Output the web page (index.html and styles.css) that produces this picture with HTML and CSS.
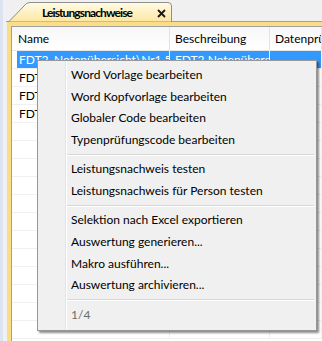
FILE: index.html
```html
<!DOCTYPE html>
<html lang="de">
  <head>
    <meta charset="UTF-8" />
    <title>Leistungsnachweise</title>
    <link rel="stylesheet" href="styles.css">
  </head>
  <body>
    <div class="window">
      <div class="edge"></div>
      <div class="pane">
        <div class="tabs">
          <div class="tab">
            <svg class="tab-shape" width="164" height="20" viewBox="0 0 164 20">
              <defs>
                <linearGradient id="tabfill" x1="0" y1="0" x2="0" y2="1">
                  <stop offset="0" stop-color="#fffbe6" />
                  <stop offset="1" stop-color="#fde6a0" />
                </linearGradient>
              </defs>
              <path d="M0.5 20 L16 4 Q18 0.5 22 0.5 L160 0.5 Q163.5 0.5 163.5 4 L163.5 20 Z" fill="url(#tabfill)" stroke="#8e8e8e" />
            </svg>
            <span class="tab-title">Leistungsnachweise</span>
            <svg class="tab-close" width="9" height="9" viewBox="0 0 9 9">
              <path d="M1 1 L8 8 M8 1 L1 8" stroke="#1a1a1a" stroke-width="1.8" />
            </svg>
          </div>
        </div>
        <div class="frame">
          <div class="list">
            <div class="row head">
              <div class="cell name">Name</div>
              <div class="cell desc">Beschreibung</div>
              <div class="cell check">Datenprüfung</div>
            </div>
            <div class="row selected">
              <div class="cell name">FDT2_Notenübersicht\Nr1.5</div>
              <div class="cell desc">FDT2 Notenübersicht</div>
              <div class="cell check"></div>
            </div>
            <div class="row">
              <div class="cell name">FDT2_Notenübersicht\Nr2.1</div>
              <div class="cell desc"></div>
              <div class="cell check"></div>
            </div>
            <div class="row">
              <div class="cell name">FDT2_Notenübersicht\Nr2.2</div>
              <div class="cell desc"></div>
              <div class="cell check"></div>
            </div>
            <div class="row">
              <div class="cell name">FDT2_Notenübersicht\Nr3.0</div>
              <div class="cell desc"></div>
              <div class="cell check"></div>
            </div>
            <div class="row"><div class="cell name"></div><div class="cell desc"></div><div class="cell check"></div></div>
            <div class="row"><div class="cell name"></div><div class="cell desc"></div><div class="cell check"></div></div>
            <div class="row"><div class="cell name"></div><div class="cell desc"></div><div class="cell check"></div></div>
            <div class="row"><div class="cell name"></div><div class="cell desc"></div><div class="cell check"></div></div>
            <div class="row"><div class="cell name"></div><div class="cell desc"></div><div class="cell check"></div></div>
            <div class="row"><div class="cell name"></div><div class="cell desc"></div><div class="cell check"></div></div>
            <div class="row"><div class="cell name"></div><div class="cell desc"></div><div class="cell check"></div></div>
            <div class="row"><div class="cell name"></div><div class="cell desc"></div><div class="cell check"></div></div>
            <div class="row"><div class="cell name"></div><div class="cell desc"></div><div class="cell check"></div></div>
            <div class="row"><div class="cell name"></div><div class="cell desc"></div><div class="cell check"></div></div>
            <div class="row"><div class="cell name"></div><div class="cell desc"></div><div class="cell check"></div></div>
            <div class="row"><div class="cell name"></div><div class="cell desc"></div><div class="cell check"></div></div>
          </div>
        </div>
      </div>
    </div>

    <!-- context menu over the list -->
    <ul class="menu">
      <li>Word Vorlage bearbeiten</li>
      <li>Word Kopfvorlage bearbeiten</li>
      <li>Globaler Code bearbeiten</li>
      <li>Typenprüfungscode bearbeiten</li>
      <li class="sep"></li>
      <li>Leistungsnachweis testen</li>
      <li>Leistungsnachweis für Person testen</li>
      <li class="sep"></li>
      <li>Selektion nach Excel exportieren</li>
      <li>Auswertung generieren...</li>
      <li>Makro ausführen...</li>
      <li>Auswertung archivieren...</li>
      <li class="sep"></li>
      <li class="disabled">1/4</li>
    </ul>
  </body>
</html>
```

FILE: styles.css
```css
body {
  margin: 0;
  font-family: "Lato", sans-serif;
  font-size: 12px;
  color: #000;
  background: #fff;
  overflow: hidden;
}
.window {
  display: flex;
  height: 341px;
}
.edge {
  width: 6px;
  background: linear-gradient(to right, #dde3f0 0, #dde3f0 3px, #eef1f8 3px);
}
.pane {
  flex: 1;
  display: flex;
  flex-direction: column;
  background: #f0f0f0;
  min-width: 0;
}
.tabs {
  height: 22px;
  display: flex;
  align-items: flex-end;
  padding-left: 2px;
  box-sizing: border-box;
  border-bottom: 1px solid #a0a0a0;
}
.tab {
  position: relative;
  width: 164px;
  height: 20px;
  margin-bottom: -1px;
  display: flex;
  align-items: center;
  flex-shrink: 0;
}
.tab-shape {
  position: absolute;
  left: 0;
  top: 0;
}
.tab-title {
  position: relative;
  margin-left: 34px;
  width: 115px;
  flex-shrink: 0;
  overflow: hidden;
  white-space: nowrap;
  font-weight: bold;
  font-size: 12px;
  letter-spacing: -0.9px;
  padding-top: 1px;
}
.tab-close {
  position: relative;
  margin-top: 3px;
  flex-shrink: 0;
}
.frame {
  flex: 1;
  margin-left: 1px;
  border-top: 4px solid #fbdc87;
  border-left: 4px solid #fbdc87;
  min-height: 0;
}
.list {
  height: 100%;
  background: #fff;
  border-top: 1px solid #a0a0a0;
  border-left: 1px solid #a0a0a0;
  overflow: hidden;
}
.row {
  display: grid;
  grid-template-columns: 158px 100px 1fr;
  height: 18px;
  box-sizing: border-box;
  border-bottom: 1px solid #f0f0f0;
}
.cell {
  border-right: 1px solid #f0f0f0;
  white-space: nowrap;
  overflow: hidden;
  line-height: 17px;
  padding-left: 5px;
}
.row .name {
  margin-left: 5px;
  padding-left: 2px;
}
.row.head {
  height: 24px;
  background: linear-gradient(#f7f7f7, #ffffff);
  border-bottom: 1px solid #e5e5e5;
}
.row.head .cell {
  line-height: 23px;
  border-right-color: #e3e3e3;
}
.row.head .name {
  margin-left: 0;
  padding-left: 6px;
}
.row.selected .cell {
  background: #3399ff;
  color: #fff;
}
.menu {
  position: absolute;
  left: 37px;
  top: 60px;
  width: 280px;
  height: 271px;
  box-sizing: border-box;
  margin: 0;
  padding: 3px 2px;
  list-style: none;
  background: #f0f0f0;
  border: 1px solid #979797;
  box-shadow: 2px 2px 2px rgba(0, 0, 0, 0.45);
  background-image: linear-gradient(to right, transparent 27px, #e2e3e3 27px, #e2e3e3 28px, #fff 28px, #fff 29px, transparent 29px);
}
.menu li {
  height: 21.67px;
  line-height: 21.67px;
  padding-left: 31px;
  white-space: nowrap;
}
.menu li.sep {
  height: 7.67px;
  margin-left: 27px;
  padding: 0;
  background: linear-gradient(transparent 3px, #d7d7d7 3px, #d7d7d7 4px, #fff 4px, #fff 5px, transparent 5px);
}
.menu li.disabled {
  color: #6d6d6d;
}
```
